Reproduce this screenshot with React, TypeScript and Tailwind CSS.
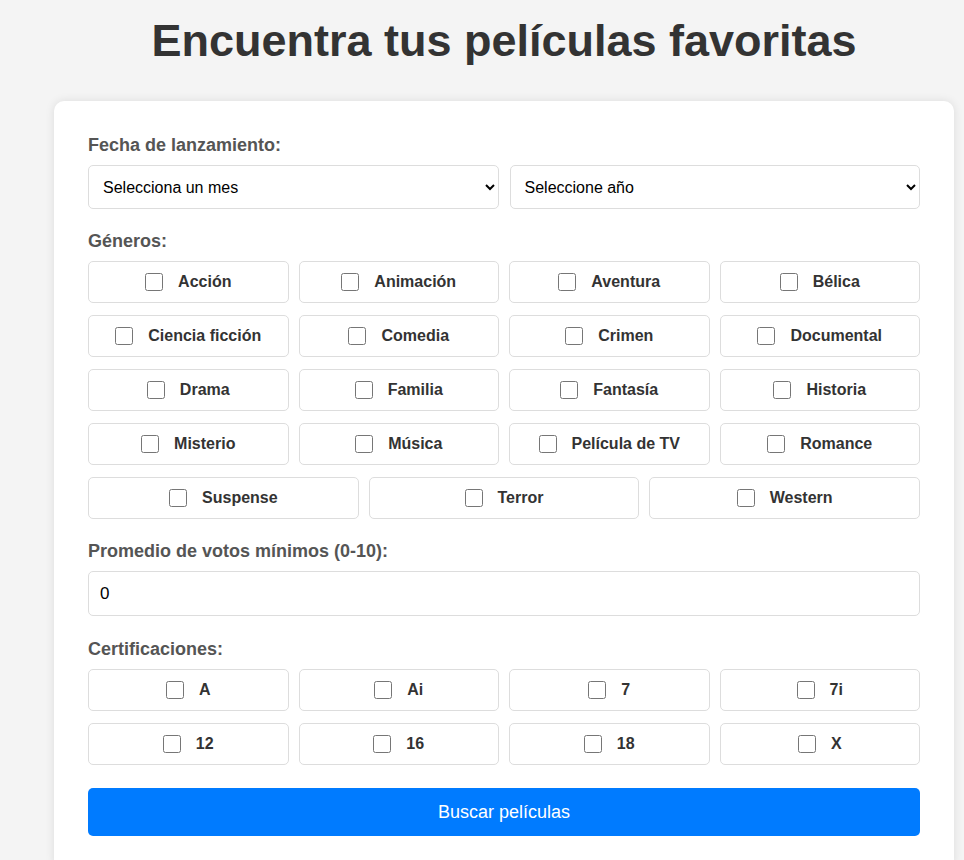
import React, { useState } from 'react';

const GENRES = [
  'Acción',
  'Animación',
  'Aventura',
  'Bélica',
  'Ciencia ficción',
  'Comedia',
  'Crimen',
  'Documental',
  'Drama',
  'Familia',
  'Fantasía',
  'Historia',
  'Misterio',
  'Música',
  'Película de TV',
  'Romance',
  'Suspense',
  'Terror',
  'Western',
];

const CERTS = ['A', 'Ai', '7', '7i', '12', '16', '18', 'X'];

function CheckItem({ label, checked, onToggle }: { label: string; checked: boolean; onToggle: () => void }) {
  return (
    <label className="flex h-[42px] cursor-pointer items-center justify-center rounded-[5px] border border-[#ddd] bg-white basis-[190px] grow">
      <input type="checkbox" checked={checked} onChange={onToggle} className="m-0 h-[18px] w-[18px] cursor-pointer" />
      <span className="ml-[15px] text-[16px] font-bold leading-[18px] text-[#333]">{label}</span>
    </label>
  );
}

export default function App() {
  const [genres, setGenres] = useState<string[]>([]);
  const [certs, setCerts] = useState<string[]>([]);
  const [votes, setVotes] = useState('0');

  const toggle = (list: string[], set: (v: string[]) => void, v: string) =>
    set(list.includes(v) ? list.filter((x) => x !== v) : [...list, v]);

  return (
    <div className="h-screen overflow-hidden bg-[#f4f4f4] pt-[15px] font-['Liberation_Sans',Arial,sans-serif]">
      <div className="ml-[54px] w-[900px]">
        {/* Title */}
        <h1 className="mb-[34px] text-center text-[45px] font-bold leading-[52px] text-[#333]">
          Encuentra tus películas favoritas
        </h1>

        {/* Search form */}
        <form
          onSubmit={(e) => e.preventDefault()}
          className="rounded-[10px] bg-white px-[34px] pb-[33px] pt-[34px] shadow-[0_0_10px_rgba(0,0,0,0.1)]"
        >
          <div className="mb-[9px] text-[18px] font-bold leading-[21px] text-[#555]">Fecha de lanzamiento:</div>
          <div className="flex gap-[11px]">
            <select className="h-[44px] flex-1 rounded-[5px] border border-[#ddd] bg-white px-[10px] text-[16px] text-black">
              <option>Selecciona un mes</option>
            </select>
            <select className="h-[44px] flex-1 rounded-[5px] border border-[#ddd] bg-white px-[10px] text-[16px] text-black">
              <option>Seleccione año</option>
            </select>
          </div>

          <div className="mb-[9px] mt-[22px] text-[18px] font-bold leading-[21px] text-[#555]">Géneros:</div>
          <div className="flex flex-wrap gap-x-[10px] gap-y-[12px]">
            {GENRES.map((g) => (
              <CheckItem key={g} label={g} checked={genres.includes(g)} onToggle={() => toggle(genres, setGenres, g)} />
            ))}
          </div>

          <div className="mb-[9px] mt-[22px] text-[18px] font-bold leading-[21px] text-[#555]">
            Promedio de votos mínimos (0-10):
          </div>
          <input
            type="number"
            min={0}
            max={10}
            value={votes}
            onChange={(e) => setVotes(e.target.value)}
            className="block h-[45px] w-full rounded-[5px] border border-[#ddd] bg-white px-[11px] text-[17px] text-black"
          />

          <div className="mb-[9px] mt-[23px] text-[18px] font-bold leading-[21px] text-[#555]">Certificaciones:</div>
          <div className="flex flex-wrap gap-x-[10px] gap-y-[12px]">
            {CERTS.map((c) => (
              <CheckItem key={c} label={c} checked={certs.includes(c)} onToggle={() => toggle(certs, setCerts, c)} />
            ))}
          </div>

          <button
            type="submit"
            className="mt-[23px] block h-[48px] w-full cursor-pointer rounded-[5px] bg-[#007bff] text-[18px] text-white"
          >
            Buscar películas
          </button>
        </form>
      </div>
    </div>
  );
}
